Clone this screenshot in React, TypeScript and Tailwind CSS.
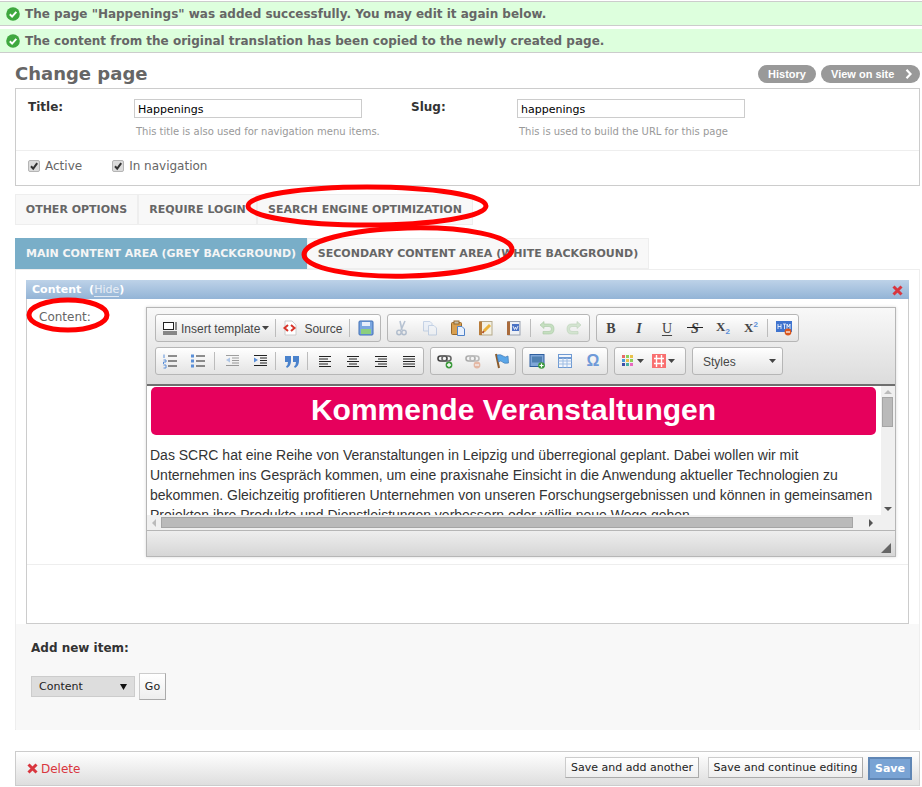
const Msg = ({ text, top }: { text: string; top?: boolean }) => (
  <div className={`flex items-center h-[24px] bg-[#ddffdd] border-b border-[#cccccc] pl-[6px] ${top ? "border-t h-[25px] mt-[1px]" : "mt-[3px]"}`}>
    <svg width="14" height="14" viewBox="0 0 14 14" className="mr-[5px] shrink-0">
      <circle cx="7" cy="7" r="6.8" fill="#3fa83f" />
      <path d="M3.8 7.2 6.1 9.6 10.3 4.9" fill="none" stroke="#fff" strokeWidth="2" />
    </svg>
    <span className="text-[12px] font-bold text-[#666666]">{text}</span>
  </div>
);

const Check = ({ label }: { label: string }) => (
  <div className="flex items-center">
    <span className="flex items-center justify-center w-[12px] h-[12px] bg-[#dcdcdc] border border-[#b5b5b5] rounded-[2px] mr-[5px]">
      <svg width="10" height="10" viewBox="0 0 10 10">
        <path d="M2 5.2 4.2 7.6 8.2 2.2" fill="none" stroke="#333" strokeWidth="2" />
      </svg>
    </span>
    <span className="text-[12px] text-[#666666]">{label}</span>
  </div>
);

const Tab = ({ label, w, active }: { label: string; w: string; active?: boolean }) => (
  <div className={`flex items-center justify-center h-full pt-[1px] text-[11px] font-bold whitespace-nowrap ${w} ${active ? "bg-[#79aec8] text-[#f5f5f5]" : "bg-[#f8f8f8] text-[#666666] border border-[#eeeeee]"}`}>
    {label}
  </div>
);

const Sep = () => <span className="w-px h-[18px] bg-[#bcbcbc] ml-[2px] mr-[3px] shrink-0" />;

const Caret = () => (
  <svg width="7" height="4" viewBox="0 0 7 4" className="shrink-0">
    <path d="M0 0H7L3.5 4Z" fill="#444" />
  </svg>
);

const Btn = ({ children, w = "w-[28px]" }: { children: React.ReactNode; w?: string }) => (
  <span className={`flex items-center justify-center h-full shrink-0 ${w}`}>{children}</span>
);

const Group = ({ children, w, className = "" }: { children: React.ReactNode; w: string; className?: string }) => (
  <div className={`flex items-center h-[28px] border border-[#b6b6b6] rounded-[3px] bg-gradient-to-b from-[#ffffff] to-[#e4e4e4] shrink-0 ${w} ${className}`}>
    {children}
  </div>
);

const Lines = ({ kind }: { kind: "left" | "center" | "right" | "full" }) => {
  const start = kind === "center" ? 3 : kind === "right" ? 4 : 1;
  const end = kind === "left" ? 10 : kind === "center" ? 11 : 13;
  return (
    <svg width="14" height="14" viewBox="0 0 14 14">
      {[0, 1, 2, 3, 4].map((i) => (
        <path key={i} d={i % 2 ? `M${start} ${2.5 + i * 2.5}H${end}` : `M1 ${2.5 + i * 2.5}H13`} stroke="#222" strokeWidth="1" />
      ))}
    </svg>
  );
};

const Ic = ({ children, w = 16, h = 16 }: { children: React.ReactNode; w?: number; h?: number }) => (
  <svg width={w} height={h} viewBox={`0 0 ${w} ${h}`}>
    {children}
  </svg>
);

const LinkIcon = ({ faded, minus }: { faded?: boolean; minus?: boolean }) => (
  <Ic>
    <g opacity={faded ? 0.4 : 1}>
      <rect x="1" y="3" width="9" height="5" rx="2.5" fill="none" stroke="#444" strokeWidth="1.6" />
      <rect x="5" y="3" width="9" height="5" rx="2.5" fill="none" stroke="#666" strokeWidth="1.6" />
      <circle cx="12" cy="12" r="3.4" fill={minus ? "#d86a3a" : "#3c9a3c"} />
      <path d={minus ? "M10 12H14" : "M10 12H14M12 10V14"} stroke="#fff" strokeWidth="1.3" />
    </g>
  </Ic>
);

const Editor = () => (
  <div className="w-[750px] h-[250px] ml-[119px] mt-[8px] border border-[#b6b6b6] shadow-[0_0_3px_rgba(0,0,0,0.15)] flex flex-col shrink-0">
    <div className="h-[78px] bg-gradient-to-b from-[#f8f8f8] to-[#dcdcdc] pt-[6px] pl-[8px] flex flex-col gap-[5px] border-b-[2px] border-[#6f6f6f] shrink-0">
      <div className="flex gap-[6px]">
        <Group w="w-[226px]">
          <Btn w="w-[25px] pl-[2px]">
            <Ic>
              <rect x="1.5" y="2.5" width="10" height="7" fill="#fff" stroke="#222" />
              <path d="M1 12H15M1 14H15M13 3H15M13 5H15M13 7H15M13 9H15" stroke="#222" />
            </Ic>
          </Btn>
          <span className="text-[12px] pt-[1px] text-[#474747] font-['Liberation_Sans',sans-serif] mr-[2px] whitespace-nowrap">Insert template</span>
          <Caret />
          <span className="w-[4px]" />
          <Sep />
          <Btn w="w-[22px]">
            <Ic>
              <path d="M3 1H10L14 5V15H3Z" fill="#fff" stroke="#ccc" />
              <path d="M6 5 2.5 8 6 11M9 5 12.5 8 9 11" fill="none" stroke="#d8352a" strokeWidth="2" />
            </Ic>
          </Btn>
          <span className="text-[12px] pt-[1px] text-[#474747] font-['Liberation_Sans',sans-serif] ml-[3px]">Source</span>
          <span className="w-[5px]" />
          <Sep />
          <Btn w="w-[26px]">
            <Ic>
              <rect x="1" y="1" width="14" height="14" rx="1" fill="#7aa6e0" stroke="#3f6fb5" />
              <rect x="4" y="2" width="8" height="4" fill="#e6eefb" />
              <rect x="3" y="9" width="10" height="5" fill="#8ccf7e" />
            </Ic>
          </Btn>
        </Group>
        <Group w="w-[203px]">
          <Btn>
            <Ic>
              <g opacity="0.45">
                <path d="M11 1 7 10M6 1 8 10" stroke="#6c86a8" strokeWidth="1.6" />
                <circle cx="5" cy="12.5" r="2.2" fill="none" stroke="#6c86a8" strokeWidth="1.5" />
                <circle cx="10" cy="12.5" r="2.2" fill="none" stroke="#6c86a8" strokeWidth="1.5" />
              </g>
            </Ic>
          </Btn>
          <Btn>
            <Ic>
              <g opacity="0.4">
                <path d="M1.5 1.5H8L10 3.5V11H1.5Z" fill="#dfeafa" stroke="#7fa0cf" />
                <path d="M6.5 5.5H12L14.5 8V15H6.5Z" fill="#eef4fc" stroke="#7fa0cf" />
              </g>
            </Ic>
          </Btn>
          <Btn>
            <Ic>
              <rect x="1.5" y="2.5" width="10" height="12" rx="1" fill="#d9a050" stroke="#98682a" />
              <rect x="4" y="1" width="5" height="3" fill="#c9c1a8" stroke="#98682a" />
              <path d="M7.5 6.5H12L14.5 9V15.5H7.5Z" fill="#e8f0fc" stroke="#4f82c8" />
            </Ic>
          </Btn>
          <Btn>
            <Ic>
              <rect x="2" y="1.5" width="12" height="13.5" fill="#f3f1e4" stroke="#b5a98a" />
              <rect x="1" y="1.5" width="3" height="13.5" fill="#b97c3a" />
              <path d="M6 11 12 5" stroke="#eab33a" strokeWidth="3" />
              <path d="M4.5 13 6 11" stroke="#b5562a" strokeWidth="2" />
            </Ic>
          </Btn>
          <Btn>
            <Ic>
              <rect x="2" y="1.5" width="12" height="13.5" fill="#eef0f4" stroke="#9aa2b0" />
              <rect x="1" y="1.5" width="3" height="13.5" fill="#a96b3c" />
              <rect x="6" y="4" width="7" height="7" fill="#4a72c4" />
              <path d="M7 6 8.5 9.5 9.5 7 10.5 9.5 12 6" fill="none" stroke="#fff" strokeWidth="0.8" />
            </Ic>
          </Btn>
          <Sep />
          <Btn w="w-[26px]">
            <Ic>
              <path d="M5 1.5 1 5 5 8.5V6.5H10Q12.5 6.5 12.5 9T10 11.5H4V14H10.5Q15 14 15 9T10.5 4H5Z" fill="#c5dfc0" stroke="#a8c8a2" strokeWidth="0.6" />
            </Ic>
          </Btn>
          <Btn>
            <Ic>
              <path d="M11 1.5 15 5 11 8.5V6.5H6Q3.5 6.5 3.5 9T6 11.5H12V14H5.5Q1 14 1 9T5.5 4H11Z" fill="#d3e4d0" stroke="#bcd2b8" strokeWidth="0.6" />
            </Ic>
          </Btn>
        </Group>
        <Group w="w-[203px]">
          <Btn><span className="font-['Liberation_Serif',serif] font-bold text-[14px] text-[#444]">B</span></Btn>
          <Btn><span className="font-['Liberation_Serif',serif] font-bold italic text-[14px] text-[#444]">I</span></Btn>
          <Btn><span className="font-['Liberation_Serif',serif] text-[14px] text-[#444] underline underline-offset-2">U</span></Btn>
          <Btn>
            <span className="relative font-['Liberation_Serif',serif] font-bold italic text-[14px] text-[#444]">
              S
              <span className="absolute -left-[4px] -right-[4px] top-[9px] h-px bg-[#222]" />
            </span>
          </Btn>
          <Btn>
            <span className="font-['Liberation_Serif',serif] font-bold text-[13px] text-[#444] -mt-[3px]">X<span className="text-[8px] font-['Liberation_Sans',sans-serif] text-[#5a8fd8] relative top-[3px]">2</span></span>
          </Btn>
          <Btn>
            <span className="font-['Liberation_Serif',serif] font-bold text-[13px] text-[#444]">X<span className="text-[8px] font-['Liberation_Sans',sans-serif] text-[#5a8fd8] relative -top-[5px]">2</span></span>
          </Btn>
          <Sep />
          <Btn w="w-[26px]">
            <Ic>
              <rect x="0" y="1" width="16" height="11" fill="#3f74cf" />
              <path d="M2 4V9M5 4V9M2 6.5H5M7 4H10M8.5 4V9M11 9V4L12.5 7 14 4V9" stroke="#fff" strokeWidth="0.8" fill="none" />
              <circle cx="12" cy="12" r="3.4" fill="#d9571e" />
              <path d="M10 12H14" stroke="#fff" strokeWidth="1.2" />
            </Ic>
          </Btn>
        </Group>
      </div>
      <div className="flex gap-[6px]">
        <Group w="w-[269px]">
          <Btn>
            <Ic>
              <path d="M6 3H15M6 8H15M6 13H15" stroke="#222" />
              <path d="M2 1.5V5M1.5 7H4V9H1.5V11M1.5 12H4V15H1.5" fill="none" stroke="#5a8fd8" />
            </Ic>
          </Btn>
          <Btn>
            <Ic>
              <path d="M6 3H15M6 8H15M6 13H15" stroke="#222" />
              <rect x="1" y="1.5" width="3" height="3" fill="#5a8fd8" />
              <rect x="1" y="6.5" width="3" height="3" fill="#5a8fd8" />
              <rect x="1" y="11.5" width="3" height="3" fill="#5a8fd8" />
            </Ic>
          </Btn>
          <Sep />
          <Btn>
            <Ic>
              <g opacity="0.45">
                <path d="M2 2.5H15M8 5H15M8 7.5H15M8 10H15M2 12.5H15" stroke="#333" />
                <path d="M6 4.5V9.5L2 7Z" fill="#5a8fd8" />
              </g>
            </Ic>
          </Btn>
          <Btn w="w-[27px]">
            <Ic>
              <path d="M2 2.5H15M8 5H15M8 7.5H15M8 10H15M2 12.5H15" stroke="#222" />
              <path d="M2 4.5V9.5L6 7Z" fill="#5a8fd8" />
            </Ic>
          </Btn>
          <Sep />
          <Btn w="w-[26px]">
            <Ic>
              <path d="M1 3H7V8Q7 13 3 15L2 13.5Q4 12 4 9H1ZM9 3H15V8Q15 13 11 15L10 13.5Q12 12 12 9H9Z" fill="#4a82cc" />
            </Ic>
          </Btn>
          <Sep />
          <Btn><Lines kind="left" /></Btn>
          <Btn><Lines kind="center" /></Btn>
          <Btn><Lines kind="right" /></Btn>
          <Btn><Lines kind="full" /></Btn>
        </Group>
        <Group w="w-[86px]">
          <Btn><LinkIcon /></Btn>
          <Btn><LinkIcon faded minus /></Btn>
          <Btn>
            <Ic>
              <path d="M3 1 6 15" stroke="#8a5a2a" strokeWidth="2" />
              <path d="M4 2Q8 1 10 3T15 3L15.5 10Q11 11 9.5 9T5.5 9Z" fill="#5aa6e8" stroke="#3f78b5" strokeWidth="0.7" />
            </Ic>
          </Btn>
        </Group>
        <Group w="w-[86px]">
          <Btn>
            <Ic>
              <rect x="1" y="1.5" width="14" height="12" fill="#7fa6d8" stroke="#2f5f9f" />
              <rect x="3" y="3.5" width="10" height="6" fill="#4f7fb0" />
              <circle cx="12.5" cy="12.5" r="3.3" fill="#3c9a3c" />
              <path d="M10.5 12.5H14.5M12.5 10.5V14.5" stroke="#fff" strokeWidth="1.2" />
            </Ic>
          </Btn>
          <Btn>
            <Ic>
              <rect x="1.5" y="1.5" width="13" height="13" fill="#f2f6fc" stroke="#6f9ad2" />
              <path d="M1.5 5H14.5" stroke="#6f9ad2" strokeWidth="2" />
              <path d="M1.5 8H14.5M1.5 11H14.5M6 5V14.5M10 5V14.5" stroke="#9dbce3" />
            </Ic>
          </Btn>
          <Btn>
            <span className="font-['Liberation_Sans',sans-serif] font-bold text-[16px] text-[#6f9ad8]">Ω</span>
          </Btn>
        </Group>
        <Group w="w-[72px]" className="pl-[6px]">
          <Ic w={14} h={14}>
            <rect x="1" y="1" width="3" height="3" fill="#e76a6a" />
            <rect x="5" y="1" width="3" height="3" fill="#8ccf5a" />
            <rect x="9" y="1" width="3" height="3" fill="#e8c14a" />
            <rect x="1" y="5" width="3" height="3" fill="#4a9ad8" />
            <rect x="5" y="5" width="3" height="3" fill="#e8c14a" />
            <rect x="9" y="5" width="3" height="3" fill="#8ccf5a" />
            <rect x="1" y="9" width="3" height="3" fill="#3c4ea8" />
            <rect x="5" y="9" width="3" height="3" fill="#4ab0a0" />
            <rect x="9" y="9" width="3" height="3" fill="#e86ac0" />
          </Ic>
          <span className="ml-[2px] mr-[7px]"><Caret /></span>
          <Ic w={16} h={16}>
            <rect x="1" y="1" width="14" height="14" fill="#f97070" />
            <path d="M3 5.5H13M3 10.5H13M5.5 2V14M10.5 2V14" stroke="#fff" strokeWidth="1.4" />
          </Ic>
          <span className="ml-[1px]"><Caret /></span>
        </Group>
        <Group w="w-[91px]" className="pl-[10px] pr-[6px] justify-between">
          <span className="text-[12px] pt-[1px] text-[#474747] font-['Liberation_Sans',sans-serif]">Styles</span>
          <Caret />
        </Group>
      </div>
    </div>
    <div className="flex h-[129px] shrink-0">
      <div className="w-[734px] h-full overflow-hidden bg-white pl-[3px] font-['Liberation_Sans',sans-serif]">
        <div className="w-[725px] h-[48px] ml-[1px] mt-[1px] pb-[4px] bg-[#e6005c] rounded-[5px] flex items-center justify-center text-white font-bold text-[30px]">
          Kommende Veranstaltungen
        </div>
        <p className="mt-[10px] text-[14px] leading-[20px] text-[#333333] whitespace-nowrap">
          Das SCRC hat eine Reihe von Veranstaltungen in Leipzig und überregional geplant. Dabei wollen wir mit
          <br />
          Unternehmen ins Gespräch kommen, um eine praxisnahe Einsicht in die Anwendung aktueller Technologien zu
          <br />
          bekommen. Gleichzeitig profitieren Unternehmen von unseren Forschungsergebnissen und können in gemeinsamen
          <br />
          Projekten ihre Produkte und Dienstleistungen verbessern oder völlig neue Wege gehen.
        </p>
      </div>
      <div className="w-[14px] h-full bg-[#f0f0f0] flex flex-col items-center justify-between py-[4px] relative">
        <svg width="8" height="4" viewBox="0 0 8 4"><path d="M0 4H8L4 0Z" fill="#bbb" /></svg>
        <div className="absolute left-[1px] top-[11px] w-[11px] h-[30px] bg-[#bababa] border border-[#a5a5a5]" />
        <svg width="8" height="4" viewBox="0 0 8 4"><path d="M0 0H8L4 4Z" fill="#555" /></svg>
      </div>
    </div>
    <div className="h-[15px] bg-[#f0f0f0] flex items-center pl-[5px] pr-[22px] shrink-0">
      <svg width="4" height="8" viewBox="0 0 4 8" className="mr-[5px]"><path d="M4 0V8L0 4Z" fill="#bbb" /></svg>
      <div className="w-[692px] h-[11px] bg-[#bababa] border border-[#a5a5a5]" />
      <svg width="4" height="8" viewBox="0 0 4 8" className="ml-auto"><path d="M0 0V8L4 4Z" fill="#555" /></svg>
    </div>
    <div className="flex-1 bg-gradient-to-b from-[#eeeeee] to-[#d6d6d6] border-t border-[#b6b6b6] flex items-end justify-end pr-[4px] pb-[3px]">
      <svg width="10" height="10" viewBox="0 0 10 10"><path d="M10 0V10H0Z" fill="#666" /></svg>
    </div>
  </div>
);

export default function App() {
  return (
    <div className="relative w-[922px] h-[787px] overflow-hidden bg-white font-['DejaVu_Sans',sans-serif]">
      <Msg top text={'The page "Happenings" was added successfully. You may edit it again below.'} />
      <Msg text="The content from the original translation has been copied to the newly created page." />

      <div className="ml-[15px] w-[905px]">
        <div className="flex items-center justify-between h-[35px]">
          <h1 className="text-[18px] font-bold text-[#666666] mt-[5px]">Change page</h1>
          <div className="flex gap-[5px] mt-[7px] font-['Liberation_Sans',sans-serif] text-[11px] font-bold text-white">
            <span className="flex items-center justify-center w-[58px] h-[18px] rounded-full bg-[#999999]">History</span>
            <span className="flex items-center w-[99px] h-[18px] rounded-full bg-[#999999] pl-[10px]">
              View on site
              <svg width="8" height="10" viewBox="0 0 8 10" className="ml-[11px]">
                <path d="M1.5 0.8 5.5 5 1.5 9.2" fill="none" stroke="#fff" strokeWidth="2.2" />
              </svg>
            </span>
          </div>
        </div>

        <div className="h-[98px] border border-[#cccccc]">
          <div className="flex h-[62px] border-b border-[#eeeeee] pt-[10px] pl-[12px]">
            <div className="w-[106px] text-[12px] font-bold text-[#333333] -mt-[1px]">Title:</div>
            <div className="w-[277px]">
              <input readOnly value="Happenings" className="block w-[228px] h-[19px] border border-[#cccccc] px-[3px] pt-[1px] text-[11px] text-black outline-none" />
              <p className="text-[10px] text-[#999999] ml-[2px] mt-[6px]">This title is also used for navigation menu items.</p>
            </div>
            <div className="w-[106px] text-[12px] font-bold text-[#333333] -mt-[1px]">Slug:</div>
            <div>
              <input readOnly value="happenings" className="block w-[228px] h-[19px] border border-[#cccccc] px-[3px] pt-[1px] text-[11px] text-black outline-none" />
              <p className="text-[10px] text-[#999999] ml-[2px] mt-[6px]">This is used to build the URL for this page</p>
            </div>
          </div>
          <div className="flex gap-[30px] pl-[12px] pt-[6px]">
            <Check label="Active" />
            <Check label="In navigation" />
          </div>
        </div>

        <div className="flex h-[31px] mt-[8px]">
          <Tab label="OTHER OPTIONS" w="w-[123px]" />
          <Tab label="REQUIRE LOGIN" w="w-[119px]" />
          <Tab label="SEARCH ENGINE OPTIMIZATION" w="w-[216px]" />
        </div>

        <div className="flex h-[31px] mt-[13px]">
          <Tab active label="MAIN CONTENT AREA (GREY BACKGROUND)" w="w-[292px]" />
          <Tab label="SECONDARY CONTENT AREA (WHITE BACKGROUND)" w="w-[342px]" />
        </div>

        <div className="h-[461px] border border-[#eeeeee] border-b-[#e8e8e8]">
          <div className="h-[354px] pl-[10px] pt-[10px] pr-[10px]">
            <div className="h-[344px] border border-[#cccccc] border-t-0">
              <div className="flex items-center justify-between h-[19px] -mx-px pl-[6px] pr-[6px] pt-[1px] bg-gradient-to-b from-[#bdd2e8] to-[#93b4d6]">
                <span className="text-[11px] font-bold text-white">
                  Content <span className="ml-[4px] font-bold">(<span className="font-normal text-[#e8eef6] border-b border-[#dfe8f2]">Hide</span>)</span>
                </span>
                <svg width="11" height="11" viewBox="0 0 11 11">
                  <path d="M1.5 1.5 9.5 9.5M9.5 1.5 1.5 9.5" stroke="#d9363e" strokeWidth="3" />
                </svg>
              </div>
              <div className="relative h-[266px] border-b border-[#eeeeee] flex">
                <span className="absolute left-[12px] top-[9px] text-[12px] text-[#666666]">Content:</span>
                <Editor />
              </div>
            </div>
          </div>
          <div className="h-[106px] bg-[#f8f8f8] pl-[15px] pt-[15px]">
            <div className="text-[12px] font-bold text-[#333333]">Add new item:</div>
            <div className="flex items-center gap-[4px] mt-[16px]">
              <div className="flex items-center justify-between w-[104px] h-[21px] bg-[#dddddd] border border-[#cccccc] pl-[7px] pr-[7px] pt-[1px] text-[11px] text-[#222222]">
                Content
                <svg width="7" height="7" viewBox="0 0 7 7" className="-mt-[2px]"><path d="M0 1H7L3.5 7Z" fill="#111" /></svg>
              </div>
              <div className="flex items-center justify-center w-[27px] h-[27px] pt-[1px] bg-gradient-to-b from-[#ffffff] to-[#eeeeee] border border-[#cccccc] border-b-[#aaaaaa] border-r-[#aaaaaa] text-[11px] text-[#222222]">
                Go
              </div>
            </div>
          </div>
        </div>

        <div className="flex items-center justify-between h-[35px] mt-[21px] border border-[#cccccc] bg-gradient-to-b from-[#ffffff] to-[#dedede] pl-[11px] pr-[7px]">
          <div className="flex items-center text-[12px] text-[#d9363e]">
            <svg width="11" height="11" viewBox="0 0 11 11" className="mr-[3px]">
              <path d="M1.5 1.5 9.5 9.5M9.5 1.5 1.5 9.5" stroke="#d9363e" strokeWidth="3" />
            </svg>
            Delete
          </div>
          <div className="flex items-start h-[23px] text-[11px] text-[#222222]">
            <span className="flex items-center justify-center w-[134px] h-[21px] pt-[1px] bg-gradient-to-b from-[#ffffff] to-[#eeeeee] border border-[#cccccc] border-b-[#aaaaaa] border-r-[#aaaaaa]">Save and add another</span>
            <span className="flex items-center justify-center w-[155px] h-[21px] pt-[1px] ml-[9px] bg-gradient-to-b from-[#ffffff] to-[#eeeeee] border border-[#cccccc] border-b-[#aaaaaa] border-r-[#aaaaaa]">Save and continue editing</span>
            <span className="flex items-center justify-center w-[44px] h-[23px] pt-[1px] ml-[5px] bg-[#79a3d4] border-2 border-[#5f86b5] font-bold text-white">Save</span>
          </div>
        </div>
      </div>

      <svg width="922" height="787" viewBox="0 0 922 787" className="absolute left-0 top-0 pointer-events-none">
        <g fill="none" stroke="#ff0000" strokeWidth="5">
          <ellipse cx="367" cy="206" rx="119" ry="19" />
          <ellipse cx="408" cy="252" rx="104" ry="24" transform="rotate(-1.5 408 252)" />
          <ellipse cx="68" cy="315" rx="39" ry="15" />
        </g>
      </svg>
    </div>
  );
}
